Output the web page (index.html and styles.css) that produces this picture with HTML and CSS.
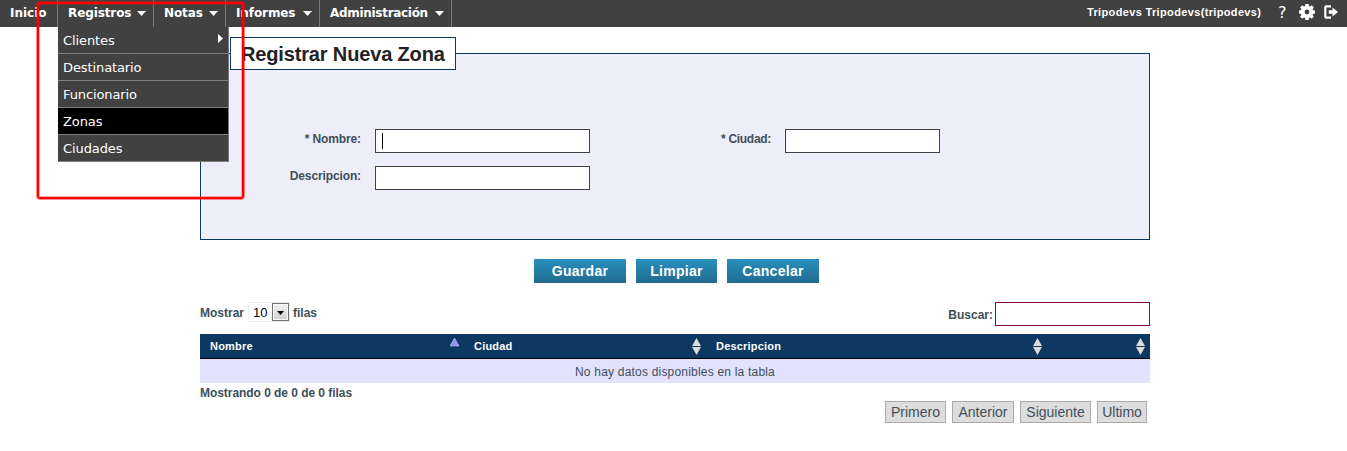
FILE: index.html
```html
<!DOCTYPE html>
<html lang="es">
<head>
<meta charset="utf-8">
<title>Registrar Nueva Zona</title>
<link rel="stylesheet" href="styles.css">
</head>
<body>
<header class="topbar">
  <nav class="menu">
    <a class="menu-item inicio"><span>Inicio</span></a>
    <div class="menu-item registros"><span>Registros</span><i class="caret"></i>
      <div class="submenu">
        <a class="sub-item"><span>Clientes</span><i class="arrow"></i></a>
        <a class="sub-item"><span>Destinatario</span></a>
        <a class="sub-item"><span>Funcionario</span></a>
        <a class="sub-item active"><span>Zonas</span></a>
        <a class="sub-item"><span>Ciudades</span></a>
      </div>
    </div>
    <a class="menu-item notas"><span>Notas</span><i class="caret"></i></a>
    <a class="menu-item informes"><span>Informes</span><i class="caret"></i></a>
    <a class="menu-item admin"><span>Administración</span><i class="caret"></i></a>
  </nav>
  <div class="user">
    <span class="user-name">Tripodevs Tripodevs(tripodevs)</span>
    <span class="help">?</span>
    <svg class="gear" width="16" height="16" viewBox="0 0 16 16"><path fill="#fff" fill-rule="evenodd" d="M6.4 0h3.2l.4 2.1 1 .4 1.8-1.2 2.1 2.1L13.600 5.200l.4 1L16 6.500v3l-2 .4-.4 1 1.200 1.800-2.100 2.100L11 13.600l-1 .4-.4 2H6.400L6 14l-1-.4-1.800 1.200-2.100-2.100L2.400 10.900l-.4-1L0 9.500v-3l2-.4.4-1L1.100 3.400l2.100-2.100L5 2.500l1-.4zM8 5.600a2.400 2.400 0 1 0 0 4.800 2.400 2.400 0 0 0 0-4.800z"/></svg>
    <svg class="exit" width="14" height="14" viewBox="0 0 14 14"><path fill="none" stroke="#fff" stroke-width="2.200" d="M7 1.300H2.300Q1.300 1.300 1.300 2.300v9.400q0 1 1 1H7"/><path fill="#fff" d="M4.800 5.300H8.500V2.600L14 7l-5.500 4.400V8.700H4.800z"/></svg>
  </div>
</header>
<main class="page">
  <section class="panel">
    <h1 class="legend">Registrar Nueva Zona</h1>
    <div class="fields">
      <div class="field"><label>* Nombre:</label><div class="box wide"><i class="cursor"></i></div></div>
      <div class="field city"><label>* Ciudad:</label><div class="box"></div></div>
      <div class="field"><label>Descripcion:</label><div class="box wide"></div></div>
    </div>
  </section>
  <div class="actions">
    <button class="btn guardar">Guardar</button><button class="btn limpiar">Limpiar</button><button class="btn cancelar">Cancelar</button>
  </div>
  <div class="controls">
    <div class="length"><span>Mostrar</span><div class="select"><span>10</span><b class="drop"><i></i></b></div><span>filas</span></div>
    <div class="search"><span>Buscar:</span><div class="box find"></div></div>
  </div>
  <div class="table">
    <div class="head">
      <div class="th c1">Nombre<svg class="sort" width="9" height="17"><path fill="#9290f5" stroke="#c8c8ff" stroke-width=".6" d="M4.500 0L9 8H0z"/></svg></div>
      <div class="th c2">Ciudad<svg class="sort" width="9" height="17"><path fill="#dcdcdc" d="M4.500 0L9 8H0zM0 9h9l-4.500 8z"/></svg></div>
      <div class="th c3">Descripcion<svg class="sort" width="9" height="17"><path fill="#dcdcdc" d="M4.500 0L9 8H0zM0 9h9l-4.500 8z"/></svg></div>
      <div class="th c4"><svg class="sort" width="9" height="17"><path fill="#dcdcdc" d="M4.500 0L9 8H0zM0 9h9l-4.500 8z"/></svg></div>
    </div>
    <div class="empty">No hay datos disponibles en la tabla</div>
  </div>
  <div class="info">Mostrando 0 de 0 de 0 filas</div>
  <div class="pager"><a class="p1">Primero</a><a class="p2">Anterior</a><a class="p3">Siguiente</a><a class="p4">Ultimo</a></div>
</main>
<div class="highlight"></div>
</body>
</html>
```
FILE: styles.css
```css
* { box-sizing: border-box; }
body { margin: 0; background: #fff; height: 451px; overflow: hidden; font: bold 12px/14px "Liberation Sans", Arial, sans-serif; color: #404f59; }
.topbar { display: flex; justify-content: space-between; height: 27px; background: #414141; color: #fff; }
.menu { display: flex; font: bold 12px/26px "DejaVu Sans", Verdana, sans-serif; letter-spacing: -.1px; white-space: nowrap; }
.menu-item { position: relative; display: flex; justify-content: space-between; height: 27px; padding: 0 7px 0 10px; border-right: 1px solid #77757f; }
.inicio { width: 58px; letter-spacing: 0; }
.registros { width: 96px; }
.notas { width: 72px; }
.informes { width: 94px; }
.admin { width: 132px; letter-spacing: -.3px; }
.caret { width: 9px; height: 5px; margin-top: 11px; background: #fff; clip-path: polygon(0 0, 100% 0, 50% 100%); }
.submenu { position: absolute; z-index: 2; left: 0; top: 27px; width: 171px; border-right: 1px solid #77757f; background: #414141; font-weight: normal; font-size: 13px; }
.sub-item { display: flex; justify-content: space-between; height: 27px; padding: 0 5px; border-bottom: 1px solid #808080; line-height: 28px; }
.sub-item.active { background: #000; }
.arrow { width: 5px; height: 9px; margin-top: 7px; background: #fff; clip-path: polygon(0 0, 100% 50%, 0 100%); }
.user { display: flex; padding-right: 9px; }
.user-name { width: 175px; margin-right: 16px; font-size: 11px; line-height: 25px; letter-spacing: .35px; white-space: nowrap; }
.help { width: 21px; font: 16px/26px "DejaVu Sans", Verdana, sans-serif; }
.gear { margin: 4px 9px 0 0; }
.exit { margin-top: 5px; }
.page { width: 950px; margin-left: 200px; padding-top: 10px; }
.panel { height: 187px; margin-top: 16px; border: 1px solid #0c3861; background: #eeeefb; }
.legend { width: 226px; height: 33px; margin: -17px 0 0 29px; padding-left: 10px; border: 1px solid #0c3861; background: #fff; font-size: 20px; line-height: 32px; letter-spacing: -.15px; color: #222; white-space: nowrap; }
.fields { display: grid; grid-template-columns: 389px 350px; row-gap: 13px; padding-top: 59px; }
.field { display: flex; justify-content: flex-end; gap: 14px; line-height: 20px; letter-spacing: -.12px; }
.field.city { letter-spacing: -.3px; }
.box { width: 155px; height: 24px; border: 1px solid #414141; background: #fff; }
.box.wide { width: 215px; }
.cursor { display: block; width: 1px; height: 16px; margin: 3px 0 0 6px; background: #000; }
.actions { display: flex; gap: 10px; margin: 19px 0 0 334px; }
.btn { width: 92px; height: 24px; padding: 0; border: 0; background: linear-gradient(#2990bd, #216a90); color: #fff; font: bold 14px/24px "Liberation Sans", Arial, sans-serif; letter-spacing: .3px; }
.btn.limpiar { width: 81px; }
.controls { display: flex; justify-content: space-between; height: 32px; margin-top: 19px; }
.length { display: flex; line-height: 22px; }
.select { display: flex; justify-content: space-between; width: 42px; height: 20px; margin: 0 3px 0 4px; padding: 0 0 0 4px; border: 1px solid #eee; color: #000; font-weight: normal; line-height: 19px; }
.select span { font-size: 13px; }
.drop { width: 17px; height: 18px; border: 1px solid #707070; background: linear-gradient(#f2f2f2, #cfcfcf); box-shadow: inset 0 0 0 1px #fafafa; }
.drop i { display: block; width: 7px; height: 4px; margin: 7px auto 0; background: #000; clip-path: polygon(0 0, 100% 0, 50% 100%); }
.search { display: flex; gap: 2px; line-height: 26px; }
.box.find { border-color: #850b4d; }
.head { display: flex; height: 25px; border-bottom: 1px solid #000; background: #0c3861; color: #fff; font-size: 11px; line-height: 25px; letter-spacing: .2px; }
.th { display: flex; justify-content: space-between; padding: 0 5px 0 10px; }
.sort { margin-top: 4px; }
.c1 { width: 264px; }
.c2 { width: 242px; }
.c3 { width: 341px; }
.c4 { width: 103px; justify-content: flex-end; }
.empty { height: 24px; background: #e2e2ff; font-weight: normal; line-height: 26px; letter-spacing: .2px; text-align: center; }
.info { height: 18px; line-height: 20px; letter-spacing: -.05px; }
.pager { display: flex; justify-content: flex-end; gap: 6px; padding-right: 3px; font-size: 14px; font-weight: normal; line-height: 20px; }
.pager a { height: 22px; border: 1px solid #aaa; background: #ddd; text-align: center; }
.p1 { width: 61px; }
.p2 { width: 62px; }
.p3 { width: 71px; }
.p4 { width: 50px; }
.highlight { position: absolute; z-index: 3; left: 37px; top: 2px; width: 207px; height: 197px; border: 2px solid #f00; border-radius: 3px; box-shadow: 0 0 0 1px rgba(255, 0, 0, .45), inset 0 0 0 1px rgba(255, 0, 0, .3); }
```
